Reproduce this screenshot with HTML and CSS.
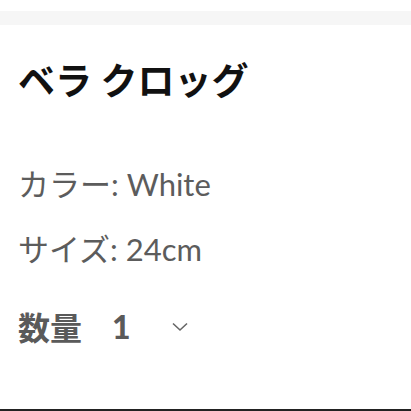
FILE: index.html
```html
<!DOCTYPE html>
<html lang="ja">
<head>
    <meta charset="UTF-8">
    <meta name="viewport" content="width=device-width, initial-scale=1.0">
    <title>ベラ クロッグ</title>
    <link rel="stylesheet" href="styles.css">
</head>
<body>
    <div class="top-bar"></div>
    <div class="item">
        <h1 class="item-name">ベラ クロッグ</h1>
        <p class="item-option">カラー: White</p>
        <p class="item-option">サイズ: 24cm</p>
        <div class="quantity">
            <span class="quantity-label">数量</span>
            <span class="quantity-value">1</span>
            <!-- flecha del selector -->
            <svg class="quantity-arrow" width="18" height="11" viewBox="0 0 18 11">
                <path d="M2 2.5 L9 9 L16 2.5" fill="none" stroke="#666" stroke-width="1.6"/>
            </svg>
        </div>
    </div>
    <div class="bottom-line"></div>
</body>
</html>
```

FILE: styles.css
```css
body {
    margin: 0;
    background-color: #ffffff;
    font-family: Lato, "Noto Sans CJK JP", sans-serif;
    height: 411px;
    display: flex;
    flex-direction: column;
}
.top-bar {
    margin-top: 11px;
    height: 14px;
    background-color: #f6f6f6;
}
.item {
    flex: 1;
    padding: 0 18px;
}
.item-name {
    margin: 31px 0 0;
    font-family: "Noto Sans CJK JP", sans-serif;
    font-size: 37px;
    font-weight: 700;
    line-height: 46px;
    color: #111111;
}
.item-option {
    margin: 0;
    font-size: 31px;
    line-height: 36px;
    color: #5c5c5c;
}
.item-option:first-of-type {
    margin-top: 64px;
}
.item-option + .item-option {
    margin-top: 29px;
}
.quantity {
    margin-top: 41px;
    display: flex;
    align-items: center;
    height: 36px;
    color: #5a5a5a;
    font-family: "Noto Sans CJK JP", sans-serif;
    font-weight: 700;
    font-size: 32px;
}
.quantity-value {
    margin-left: 30px;
    font-family: Lato, sans-serif;
    font-weight: 900;
}
.quantity-arrow {
    margin-left: 40px;
}
.bottom-line {
    height: 2px;
    background-color: #222222;
}
```
